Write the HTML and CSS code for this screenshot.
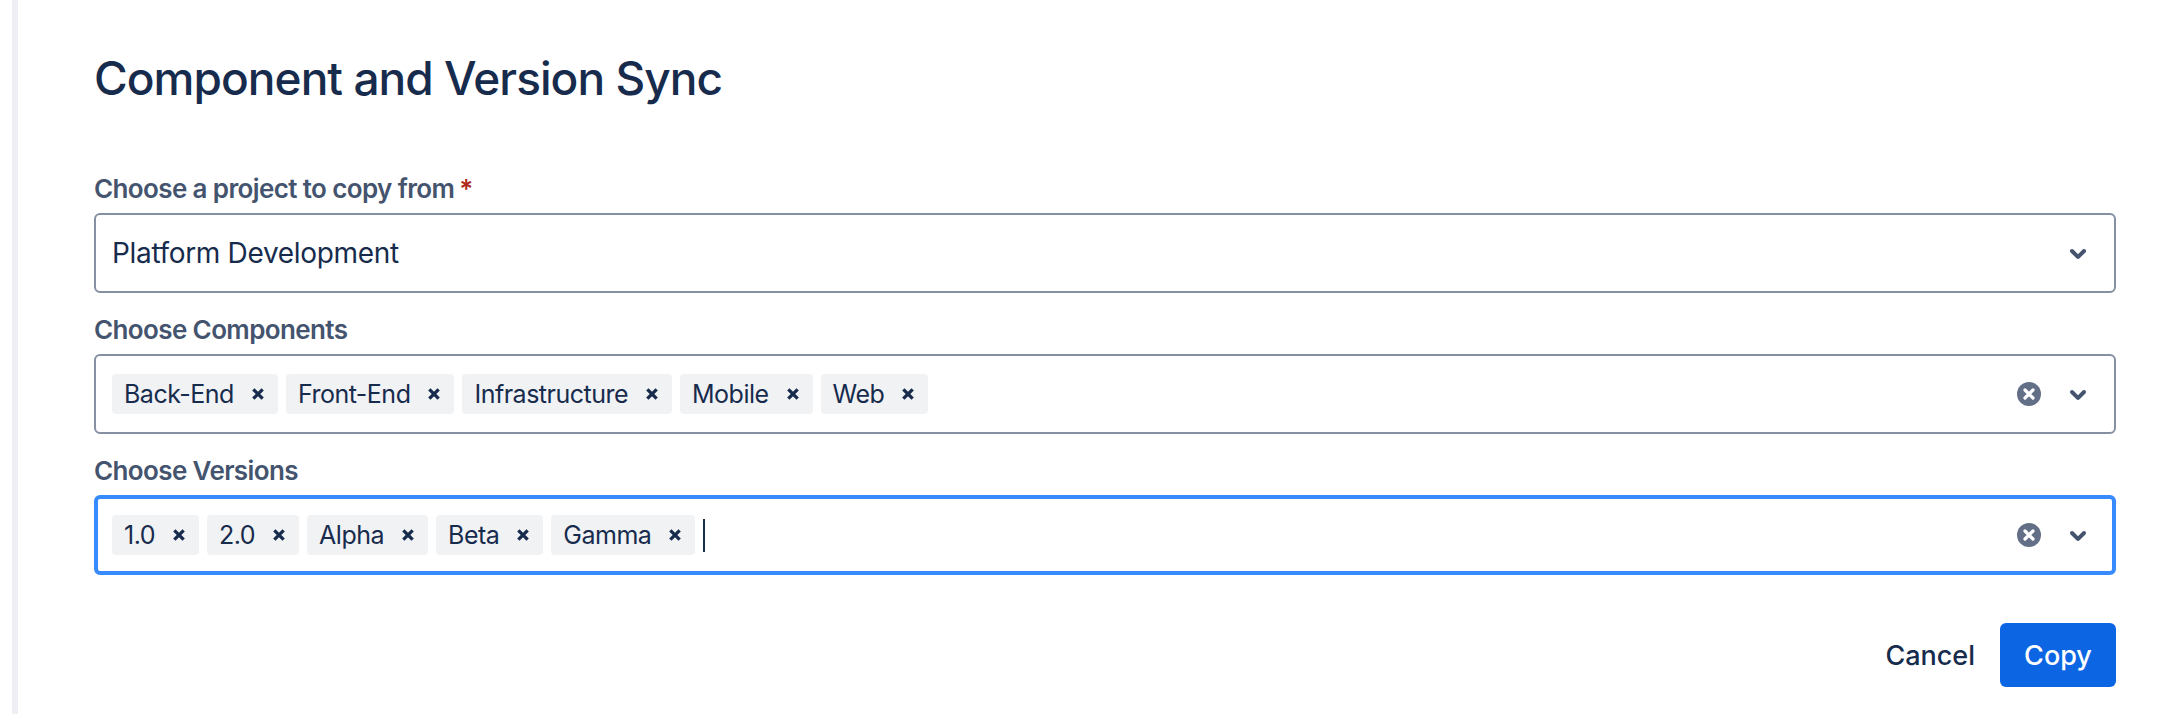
FILE: index.html
```html
<!DOCTYPE html>
<html lang="en">
<head>
    <meta charset="UTF-8">
    <title>Component and Version Sync</title>
    <link rel="stylesheet" href="styles.css">
</head>
<body>
    <div class="dialog">
        <h1 class="title">Component and Version Sync</h1>

        <div class="group">
            <label class="label">Choose a project to copy from<span class="required">*</span></label>
            <div class="field">
                <div class="value">Platform Development</div>
                <svg class="chevron" viewBox="0 0 24 24"><path d="M8.292 10.293a1.009 1.009 0 000 1.419l2.939 2.965c.218.215.5.322.779.322s.556-.107.769-.322l2.93-2.955a1.01 1.01 0 000-1.419.987.987 0 00-1.406 0l-2.298 2.317-2.307-2.327a.99.99 0 00-1.406 0z"/></svg>
            </div>
        </div>

        <div class="group">
            <label class="label">Choose Components</label>
            <div class="field">
                <div class="value chips">
                    <span class="chip">Back-End<svg class="chip-x" viewBox="0 0 12 12"><path d="M2 2l8 8M10 2l-8 8"/></svg></span>
                    <span class="chip">Front-End<svg class="chip-x" viewBox="0 0 12 12"><path d="M2 2l8 8M10 2l-8 8"/></svg></span>
                    <span class="chip">Infrastructure<svg class="chip-x" viewBox="0 0 12 12"><path d="M2 2l8 8M10 2l-8 8"/></svg></span>
                    <span class="chip">Mobile<svg class="chip-x" viewBox="0 0 12 12"><path d="M2 2l8 8M10 2l-8 8"/></svg></span>
                    <span class="chip">Web<svg class="chip-x" viewBox="0 0 12 12"><path d="M2 2l8 8M10 2l-8 8"/></svg></span>
                </div>
                <svg class="clear" viewBox="0 0 24 24"><circle cx="12" cy="12" r="12"/><path d="M8 8l8 8M16 8l-8 8"/></svg>
                <svg class="chevron" viewBox="0 0 24 24"><path d="M8.292 10.293a1.009 1.009 0 000 1.419l2.939 2.965c.218.215.5.322.779.322s.556-.107.769-.322l2.93-2.955a1.01 1.01 0 000-1.419.987.987 0 00-1.406 0l-2.298 2.317-2.307-2.327a.99.99 0 00-1.406 0z"/></svg>
            </div>
        </div>

        <div class="group">
            <label class="label">Choose Versions</label>
            <div class="field focused">
                <div class="value chips">
                    <span class="chip">1.0<svg class="chip-x" viewBox="0 0 12 12"><path d="M2 2l8 8M10 2l-8 8"/></svg></span>
                    <span class="chip">2.0<svg class="chip-x" viewBox="0 0 12 12"><path d="M2 2l8 8M10 2l-8 8"/></svg></span>
                    <span class="chip">Alpha<svg class="chip-x" viewBox="0 0 12 12"><path d="M2 2l8 8M10 2l-8 8"/></svg></span>
                    <span class="chip">Beta<svg class="chip-x" viewBox="0 0 12 12"><path d="M2 2l8 8M10 2l-8 8"/></svg></span>
                    <span class="chip">Gamma<svg class="chip-x" viewBox="0 0 12 12"><path d="M2 2l8 8M10 2l-8 8"/></svg></span>
                    <span class="caret"></span>
                </div>
                <svg class="clear" viewBox="0 0 24 24"><circle cx="12" cy="12" r="12"/><path d="M8 8l8 8M16 8l-8 8"/></svg>
                <svg class="chevron" viewBox="0 0 24 24"><path d="M8.292 10.293a1.009 1.009 0 000 1.419l2.939 2.965c.218.215.5.322.779.322s.556-.107.769-.322l2.93-2.955a1.01 1.01 0 000-1.419.987.987 0 00-1.406 0l-2.298 2.317-2.307-2.327a.99.99 0 00-1.406 0z"/></svg>
            </div>
        </div>

        <div class="actions">
            <button class="btn">Cancel</button>
            <button class="btn primary">Copy</button>
        </div>
    </div>
</body>
</html>
```

FILE: styles.css
```css
* {
    box-sizing: border-box;
    margin: 0;
    padding: 0;
}

body {
    font-family: Inter, "Liberation Sans", sans-serif;
    background: #ffffff;
    color: #172b4d;
    height: 714px;
    overflow: hidden;
}

.dialog {
    margin-left: 12px;
    height: 714px;
    border-left: 6px solid #eeeef4;
    padding: 50px 60px 0 76px;
}

.title {
    font-size: 46px;
    line-height: 56px;
    font-weight: 500;
    letter-spacing: -0.95px;
    margin-bottom: 67px;
}

.group {
    margin-top: 21px;
}

.label {
    display: block;
    font-size: 26px;
    line-height: 32px;
    font-weight: 600;
    letter-spacing: -0.62px;
    color: #44546f;
    margin-bottom: 8px;
}

.required {
    margin-left: 5px;
    color: #ae2a19;
}

.field {
    display: flex;
    align-items: center;
    height: 80px;
    border: 2px solid #8590a2;
    border-radius: 6px;
    padding: 0 12px 0 16px;
}

.field.focused {
    border: 4px solid #388bff;
    padding-left: 14px;
    padding-right: 10px;
}

.value {
    flex: 1;
    font-size: 28px;
    letter-spacing: -0.33px;
}

.chips {
    display: flex;
    align-items: center;
    gap: 8px;
}

.chip {
    display: flex;
    align-items: center;
    height: 40px;
    padding: 0 13px 0 12px;
    gap: 17px;
    background: #f1f2f4;
    border-radius: 4px;
    font-size: 25px;
    letter-spacing: -0.5px;
}

.chip-x {
    width: 14px;
    height: 14px;
    fill: none;
    stroke: #172b4d;
    stroke-width: 2.8;
}

.caret {
    width: 2px;
    height: 33px;
    background: #172b4d;
}

.clear {
    width: 24px;
    height: 24px;
    margin-right: 13px;
}

.clear circle {
    fill: #626f86;
}

.clear path {
    fill: none;
    stroke: #ffffff;
    stroke-width: 3.2;
    stroke-linecap: round;
}

.chevron {
    width: 48px;
    height: 48px;
    fill: #44546f;
}

.actions {
    display: flex;
    justify-content: flex-end;
    align-items: center;
    gap: 25px;
    margin-top: 48px;
}

.btn {
    font-family: inherit;
    font-size: 27px;
    font-weight: 500;
    background: none;
    border: none;
    color: #172b4d;
}

.btn.primary {
    width: 116px;
    height: 64px;
    border-radius: 6px;
    background: #0c66e4;
    color: #ffffff;
}
```
